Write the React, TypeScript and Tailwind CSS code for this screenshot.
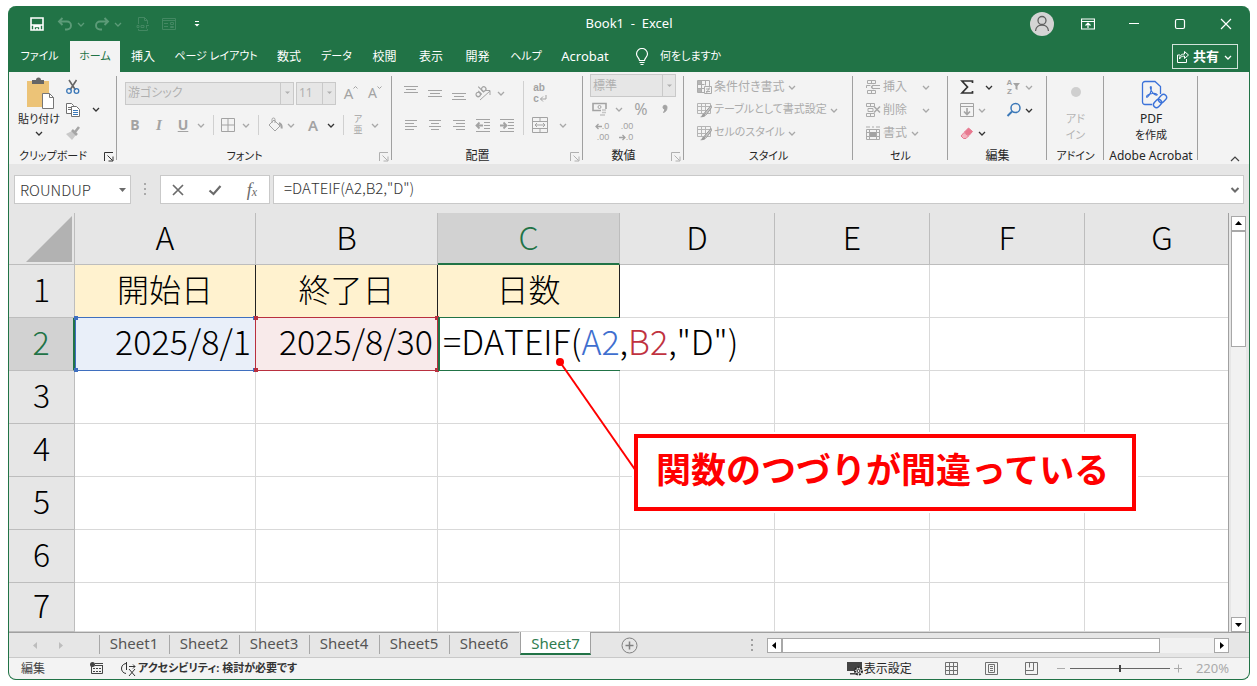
import React, { useState } from 'react';

interface IconProps {
  className?: string;
}

interface SvgProps extends IconProps {
  w?: number;
  h?: number;
  children: React.ReactNode;
}

function Svg({ w = 16, h = 16, className = '', children }: SvgProps) {
  return (
    <svg
      width={w}
      height={h}
      viewBox={`0 0 ${w} ${h}`}
      fill="none"
      stroke="currentColor"
      className={`shrink-0 ${className}`}
      aria-hidden="true"
    >
      {children}
    </svg>
  );
}

function Chevron({ className = 'text-[#a8a8a8]' }: IconProps) {
  return (
    <Svg w={12} h={12} className={className}>
      <path d="M3 5l3 3 3-3" strokeWidth="1.3" />
    </Svg>
  );
}

function Lines({ rows }: { rows: [number, number, number][] }) {
  return (
    <Svg w={16} h={20}>
      {rows.map(([x1, x2, y]) => (
        <path key={y} d={`M${x1} ${y}.5H${x2}`} />
      ))}
    </Svg>
  );
}

interface ToolProps {
  label: string;
  className?: string;
  children: React.ReactNode;
}

function Tool({ label, className = 'w-6', children }: ToolProps) {
  return (
    <button type="button" aria-label={label} className={`flex shrink-0 items-center justify-center ${className}`}>
      {children}
    </button>
  );
}

function Sep() {
  return <span className="mx-[6px] h-5 w-px shrink-0 bg-[#d0d0d0]" />;
}

interface GroupProps {
  title: string;
  className: string;
  launcher?: string;
  small?: boolean;
  children: React.ReactNode;
}

function Group({ title, className, launcher, small = false, children }: GroupProps) {
  return (
    <section aria-label={title} className={`relative flex shrink-0 flex-col ${className}`}>
      <div className="h-[76px] text-[#a3a3a3]">{children}</div>
      <div
        className={`flex h-4 items-center justify-center whitespace-nowrap text-[#262626] ${
          small ? 'text-[11px]' : 'text-xs'
        } ${launcher ? 'pr-5' : ''}`}
      >
        {title}
      </div>
      {launcher && (
        <button type="button" aria-label={`${title}の設定`} className={`absolute right-[3px] bottom-[2px] ${launcher}`}>
          <Svg w={10} h={10}>
            <path d="M.5 9V.5H9M3.500 3.500l5 5M9 4.500V9H4.500" />
          </Svg>
        </button>
      )}
      <span className="absolute top-1 right-0 bottom-1 w-px bg-[#a0a0a0]" />
    </section>
  );
}

interface ComboProps {
  label: string;
  value: string;
  className: string;
}

function Combo({ label, value, className }: ComboProps) {
  return (
    <div className={`flex h-[23px] border border-[#c9c9c9] bg-[#e6e6e6] ${className}`}>
      <select
        aria-label={label}
        defaultValue={value}
        disabled
        className="min-w-0 flex-1 appearance-none pl-[2px] text-xs leading-5 text-[#b0b0b0]"
      >
        <option>{value}</option>
      </select>
      <span className="flex w-[13px] items-center justify-center border-l border-[#c9c9c9] text-[#b0b0b0]">
        <Svg w={7} h={4}>
          <path d="M1 .5h5L3.500 3z" fill="currentColor" stroke="none" />
        </Svg>
      </span>
    </div>
  );
}

const tabs = [
  { name: 'ファイル', width: 'w-[61px] text-[11px]' },
  { name: 'ホーム', width: 'w-[50px] text-[11px]' },
  { name: '挿入', width: 'w-[46px]' },
  { name: 'ページ レイアウト', width: 'w-[100px] text-[11px]' },
  { name: '数式', width: 'w-[46px]' },
  { name: 'データ', width: 'w-[49px] text-[11px]' },
  { name: '校閲', width: 'w-[47px]' },
  { name: '表示', width: 'w-[46px]' },
  { name: '開発', width: 'w-[47px]' },
  { name: 'ヘルプ', width: 'w-[50px] text-[11px]' },
  { name: 'Acrobat', width: 'w-[68px] text-[13px]' }
];

function TitleBar() {
  return (
    <header className="relative flex h-[35px] items-center text-white">
      <div className="flex items-center pl-[18px]">
        <Tool label="上書き保存" className="w-5">
          <Svg w={14} h={14}>
            <path d="M1 1h12v12H1z" strokeWidth="1.600" />
            <path d="M1 8h12M4 13v-3.500h6V13" strokeWidth="1.600" />
            <path d="M7 11v2" strokeWidth="1.600" />
          </Svg>
        </Tool>
        <div className="flex items-center pl-2 text-[#5c9b78]">
          <Tool label="元に戻す" className="w-5">
            <Svg>
              <path d="M5.500 2L2 5.500 5.500 9M2 5.500h8a4 4 0 0 1 0 8H8" strokeWidth="1.900" />
            </Svg>
          </Tool>
          <Chevron className="text-[#5c9b78]" />
          <Tool label="やり直し" className="ml-[5px] w-5">
            <Svg>
              <path d="M10.500 2L14 5.500 10.500 9M14 5.500H6a4 4 0 0 0 0 8h2" strokeWidth="1.900" />
            </Svg>
          </Tool>
          <Chevron className="text-[#5c9b78]" />
          <Tool label="PDF" className="ml-[5px] w-7">
            <Svg className="text-[#438862]">
              <path d="M3.500 8V1.500h6l3 3V8M9.500 1.500v3h3M3.500 13v1.500h9V13" />
              <path d="M2 9.500h2v2H2zM6 9.500h3v2H6zM11 9.500h3M11.500 9v3.500" />
            </Svg>
          </Tool>
          <Tool label="フォーム" className="w-6">
            <Svg className="text-[#438862]">
              <path d="M1.500 2.500h13v11h-13zM1.500 4.500h13M3 7.500h4M3 10.500h4M9.500 6.500h3v2h-3zM9.500 10.500h3v1h-3z" />
            </Svg>
          </Tool>
        </div>
        <Tool label="クイック アクセスのユーザー設定" className="w-8">
          <Svg w={8} h={8}>
            <path d="M2 1.500h4" />
            <path d="M1.500 4h5L4 6.500z" fill="currentColor" stroke="none" />
          </Svg>
        </Tool>
      </div>
      <h1 className="absolute inset-x-0 pt-px text-center text-[13px] font-normal whitespace-pre">Book1  -  Excel</h1>
      <div className="relative ml-auto flex items-center pr-[11px]">
        <Tool label="アカウント" className="w-6">
          <Svg w={24} h={24} className="text-[#5f5f5f]">
            <circle cx="12" cy="12" r="12" fill="#d4d4d4" stroke="none" />
            <circle cx="12" cy="8.500" r="4" strokeWidth="1.300" />
            <path d="M5.500 19c.5-8 12.500-8 13 0" strokeWidth="1.300" />
          </Svg>
        </Tool>
        <Tool label="リボンの表示オプション" className="ml-[22px] w-6">
          <Svg w={14} h={12}>
            <path d="M.5 1h13v10H.5zM.5 3.500h13M7 10V5.500M4.500 7.500L7 5l2.500 2.500" strokeWidth="1.200" />
          </Svg>
        </Tool>
        <Tool label="最小化" className="ml-[22px] w-6">
          <Svg w={12} h={12}>
            <path d="M1 5.500h10" />
          </Svg>
        </Tool>
        <Tool label="最大化" className="ml-[22px] w-6">
          <Svg w={12} h={12}>
            <rect x="1.500" y="1.500" width="9" height="9" rx="1.500" strokeWidth="1.200" />
          </Svg>
        </Tool>
        <Tool label="閉じる" className="ml-[22px] w-6">
          <Svg w={12} h={12}>
            <path d="M1 1l10 10M11 1L1 11" strokeWidth="1.200" />
          </Svg>
        </Tool>
      </div>
    </header>
  );
}

function TabBar() {
  const [active, setActive] = useState('ホーム');

  return (
    <nav className="flex h-[31px] text-xs text-white">
      {tabs.map((tab) => (
        <button
          key={tab.name}
          type="button"
          onClick={() => setActive(tab.name)}
          className={`flex shrink-0 items-center justify-center whitespace-nowrap ${tab.width} ${
            tab.name === active ? 'bg-[#f3f3f3] text-[#217346]' : ''
          }`}
        >
          {tab.name}
        </button>
      ))}
      <button type="button" className="ml-4 flex shrink-0 items-center gap-[11px] text-[11px] whitespace-nowrap">
        <Svg w={14} h={18}>
          <path d="M4.500 12.500c0-2.500-3-3.500-3-6.500a5.500 5.500 0 0 1 11 0c0 3-3 4-3 6.500zM4.500 14.500h5M5.500 16.500h3" strokeWidth="1.200" />
        </Svg>
        何をしますか
      </button>
      <button
        type="button"
        className="mt-[3px] mr-[11px] ml-auto flex h-[25px] w-[66px] shrink-0 items-center justify-center border border-white/80 text-[13px] font-bold"
      >
        <Svg w={14} h={14} className="mr-[3px]">
          <path d="M4 5H1.500v7.500h9V9M3.500 9c0-3.500 2-5 5-5V1.500L12.500 5 8.500 8.500V6C6 6 4.500 7 3.500 9z" />
        </Svg>
        共有
        <Chevron className="ml-[3px] text-white" />
      </button>
    </nav>
  );
}

function TableGlyph() {
  return (
    <Svg>
      <path d="M1.500 1.500h13v10h-13zM1.500 4.500h13M1.500 8.500h13M5.500 1.500v10M9.500 1.500v10" stroke="#b5b5b5" />
      <path d="M15 3.500L8.500 11l2 1.500 5-7z" fill="#c4c4c4" stroke="#9c9c9c" />
      <path d="M4 15c2 0 2-3.500 4-3.500l2 1.500c-1 2-3.500 2.500-6 2z" fill="#9c9c9c" stroke="none" />
    </Svg>
  );
}

const styleCommands = [
  {
    name: '条件付き書式',
    size: 'text-xs',
    icon: (
      <Svg>
        <path d="M1.500 1.500h12v12h-12zM1.500 5.500h7M1.500 9.500h7M5.500 1.500v12M9.500 1.500v5" />
        <path d="M2 2h3v3H2zM2 10h3v3H2z" fill="#b5b5b5" stroke="none" />
        <path d="M8.500 7.500h7v7h-7z" fill="#f3f3f3" />
        <path d="M10 10h4M10 12.500h4M13.500 8.500l-3 5.500" />
      </Svg>
    )
  },
  { name: 'テーブルとして書式設定', size: 'text-[11px]', icon: <TableGlyph /> },
  { name: 'セルのスタイル', size: 'text-[11px]', icon: <TableGlyph /> }
];

const cellCommands = [
  {
    name: '挿入',
    icon: (
      <Svg>
        <path d="M2.500 1.500h8v3h-8zM6.500 1.500v3M2.500 11.500h8v3h-8zM6.500 11.500v3M1.500 9V6.500h4M15 6.500H7v3h8M9 6l-3 2 3 2" />
      </Svg>
    )
  },
  {
    name: '削除',
    icon: (
      <Svg>
        <path d="M1.500 1.500h8v3h-8zM5.500 1.500v3M1.500 11.500h8v3h-8zM5.500 11.500v3M3 6.500h5v3H3z" />
        <path d="M9 4.500l6 6M15 4.500l-6 6" strokeWidth="1.600" />
      </Svg>
    )
  },
  {
    name: '書式',
    icon: (
      <Svg>
        <path d="M1.500 4.500h13v10h-13zM4.500 4.500v10M11.500 4.500v10M1.500 7.500h13M1.500 11.500h13M2 1v2M14 1v2M3 2h2M7 2h2M11 2h2" />
        <path d="M5 7h6v5H5z" fill="#a3a3a3" stroke="none" />
      </Svg>
    )
  }
];

const tiny = "font-['Liberation_Sans','Noto_Sans_CJK_JP',sans-serif]";

function Ribbon() {
  return (
    <div className="flex h-[92px] bg-[#f3f3f3]">
      <Group title="クリップボード" small className="w-[108px]" launcher="text-[#333]">
        <div className="flex">
          <button type="button" className="ml-[6px] flex w-12 flex-col items-center text-[11px] text-[#262626]">
            <Svg w={30} h={34} className="mt-[4px] mb-px ml-[2px]">
              <path d="M2 5h22v26H2z" fill="#ecc377" stroke="none" />
              <path d="M7 8V4h4a2.500 2.500 0 0 1 5 0h3v4z" fill="#666" stroke="none" />
              <path d="M17.500 17.500h7l4 4v11h-11z" fill="#fff" stroke="#777" />
              <path d="M24.500 17.500v4h4" stroke="#777" />
            </Svg>
            <span className="leading-4 whitespace-nowrap">貼り付け</span>
            <Chevron className="text-[#333]" />
          </button>
          <div className="flex flex-col pt-[3px]">
            <Tool label="切り取り" className="h-[23px] w-5">
              <Svg>
                <path d="M4 1l6.500 10M11.500 1L5 11" stroke="#666" strokeWidth="1.600" />
                <circle cx="4" cy="12" r="2.300" stroke="#3b78b8" strokeWidth="1.300" />
                <circle cx="11.500" cy="12" r="2.300" stroke="#3b78b8" strokeWidth="1.300" />
              </Svg>
            </Tool>
            <Tool label="コピー" className="h-[23px] w-5">
              <Svg className="text-[#707070]">
                <path d="M1.500 1.500h5l2 2v8h-7zM3 5.500h3M3 7.500h3" fill="#fff" />
                <path d="M6.500 4.500h5l3 3v7h-8z" fill="#fff" />
                <path d="M8 8.500h5M8 10.500h5M8 12.500h5" stroke="#3b78b8" />
              </Svg>
            </Tool>
            <Tool label="書式のコピー" className="h-[23px] w-5">
              <Svg>
                <path d="M1 9l6-3 4 4-4 5z" fill="#c9c9c9" stroke="none" />
                <path d="M7 5l5 5M10 7l4-5" stroke="#a5a5a5" strokeWidth="2.600" />
              </Svg>
            </Tool>
          </div>
          <Chevron className="mt-[31px] ml-[7px] text-[#333]" />
        </div>
      </Group>

      <Group title="フォント" small className="w-[275px]" launcher="text-[#b0b0b0]">
        <div className="flex flex-col pt-[5px]">
          <div className="flex h-8 items-center pl-2">
            <Combo label="フォント名" value="游ゴシック" className="w-[169px]" />
            <Combo label="フォント サイズ" value="11" className="ml-[2px] w-10" />
            <Tool label="フォント サイズの拡大" className="ml-[3px] w-6 text-[15px]">
              A
              <Svg w={5} h={12} className="mb-1">
                <path d="M.5 3.500L2.500 1.500l2 2" />
              </Svg>
            </Tool>
            <Tool label="フォント サイズの縮小" className="w-6 text-sm">
              A
              <Svg w={5} h={12} className="mb-1">
                <path d="M.5 1.500l2 2 2-2" />
              </Svg>
            </Tool>
          </div>
          <div className="flex h-8 items-center pl-[6px]">
            <Tool label="太字">
              <b className="text-sm">B</b>
            </Tool>
            <Tool label="斜体">
              <i className="font-['Liberation_Serif',serif] text-[15px] font-bold">I</i>
            </Tool>
            <Tool label="下線">
              <span className="text-sm font-bold underline">U</span>
            </Tool>
            <Chevron />
            <Sep />
            <Tool label="罫線" className="w-4">
              <Svg>
                <path d="M1.500 1.500h13v13h-13zM8 1.500v13M1.500 8h13" />
              </Svg>
            </Tool>
            <Chevron className="ml-1 text-[#a8a8a8]" />
            <Sep />
            <Tool label="塗りつぶしの色" className="w-5">
              <Svg>
                <path d="M7 3l6 6-5 5-6-6zM5 6V2.500a1.500 1.500 0 0 1 3 0V6" />
                <path d="M12 6c2 1 3 3 2.500 5.500" strokeWidth="2" />
              </Svg>
            </Tool>
            <Chevron />
            <Tool label="フォントの色" className="ml-1 w-6">
              <span className="text-[15px] font-semibold">A</span>
            </Tool>
            <Chevron className="text-[#333]" />
            <Sep />
            <Tool label="ふりがな" className="w-4">
              <span className={`flex flex-col items-center text-[9px] leading-[11px] ${tiny}`}>
                <span>ア</span>
                <span>亜</span>
              </span>
            </Tool>
            <Chevron className="ml-[3px] text-[#a8a8a8]" />
          </div>
        </div>
      </Group>

      <Group title="配置" className="w-[191px]" launcher="text-[#b0b0b0]">
        <div className="flex pt-[5px] pl-[7px]">
          <div className="w-[120px]">
            <div className="flex h-8 items-center">
              <Tool label="上揃え"><Lines rows={[[1, 15, 3], [3, 13, 6], [1, 15, 9]]} /></Tool>
              <Tool label="上下中央揃え"><Lines rows={[[1, 15, 7], [3, 13, 10], [1, 15, 13]]} /></Tool>
              <Tool label="下揃え"><Lines rows={[[1, 15, 10], [3, 13, 13], [1, 15, 16]]} /></Tool>
              <Tool label="方向">
                <Svg w={18} h={18} className="overflow-visible">
                  <path d="M6 16L16 7M11.500 6.500H16V11" />
                  <g transform="rotate(-45 6 8)" strokeWidth="1.200">
                    <circle cx="3" cy="8.500" r="2.200" />
                    <path d="M5.500 6v5M8.500 3v8" />
                    <circle cx="10.800" cy="8.500" r="2.200" />
                  </g>
                </Svg>
              </Tool>
              <Chevron />
            </div>
            <div className="flex h-8 items-center">
              <Tool label="左揃え"><Lines rows={[[2, 14, 5], [2, 11, 8], [2, 14, 11], [2, 11, 14]]} /></Tool>
              <Tool label="中央揃え"><Lines rows={[[2, 14, 5], [4, 12, 8], [2, 14, 11], [4, 12, 14]]} /></Tool>
              <Tool label="右揃え"><Lines rows={[[2, 14, 5], [5, 14, 8], [2, 14, 11], [5, 14, 14]]} /></Tool>
              <Tool label="インデントを減らす">
                <Svg>
                  <path d="M1 2.500h14M9 5.500h6M9 8.500h6M9 11.500h6M1 14.500h14" />
                  <path d="M8 8.500H2M4.500 5.500l-3 3 3 3" strokeWidth="1.800" />
                </Svg>
              </Tool>
              <Tool label="インデントを増やす">
                <Svg>
                  <path d="M1 2.500h14M9 5.500h6M9 8.500h6M9 11.500h6M1 14.500h14" />
                  <path d="M1 8.500h6M4.500 5.500l3 3-3 3" strokeWidth="1.800" />
                </Svg>
              </Tool>
            </div>
          </div>
          <span className="mx-1 mt-1 h-[54px] w-px bg-[#d0d0d0]" />
          <div>
            <div className="flex h-8 items-center">
              <Tool label="折り返して全体を表示する">
                <span className={`flex flex-col text-left text-[10px] leading-[11px] font-bold ${tiny}`}>
                  <span>ab</span>
                  <span className="flex">
                    c
                    <Svg w={8} h={9}>
                      <path d="M7 2v4H1.500M4 3.500L1.500 6 4 8.500" />
                    </Svg>
                  </span>
                </span>
              </Tool>
            </div>
            <div className="flex h-8 items-center">
              <Tool label="セルを結合して中央揃え">
                <Svg>
                  <path d="M.5 .5h15v15H.5zM.5 4.500h15M.5 11.500h15M8 .5v4M8 11.500v4M3 8h10M5 6L3 8l2 2M11 6l2 2-2 2" />
                </Svg>
              </Tool>
              <Chevron className="ml-[5px] text-[#a8a8a8]" />
            </div>
          </div>
        </div>
      </Group>

      <Group title="数値" className="w-[101px]" launcher="text-[#b0b0b0]">
        <div className="pt-[2px] pl-[7px]">
          <Combo label="表示形式" value="標準" className="w-[86px]" />
          <div className="flex h-[23px] items-center">
            <Tool label="通貨表示形式" className="w-5">
              <Svg>
                <path d="M1 2.500h13v7H1z" strokeWidth="1.600" />
                <circle cx="7.500" cy="6" r="1.500" />
                <path d="M9 8h6v7H9z" fill="#f3f3f3" stroke="none" />
                <path d="M10 9h4M10 11.500h4M8 14h5" stroke="#c5c5c5" strokeWidth="1.600" />
              </Svg>
            </Tool>
            <Chevron className="ml-[3px] text-[#a8a8a8]" />
            <Tool label="パーセント スタイル" className="ml-1 w-6 text-base">%</Tool>
            <Tool label="桁区切りスタイル">
              <Svg w={8} h={12}>
                <path d="M2 4a2 2 0 1 1 4 .5C6 7 4.500 9 2.500 9.500L4 6.500C3 6.500 2 5.500 2 4z" fill="currentColor" />
              </Svg>
            </Tool>
          </div>
          <div className={`flex h-[23px] items-center text-[9px] leading-[11px] ${tiny}`}>
            <Tool label="小数点以下の表示桁数を増やす">
              <span className="flex flex-col items-end">
                <span className="flex items-center">
                  <Svg w={7} h={7}>
                    <path d="M7 3.500H1.500M3.500 1L1 3.500 3.500 6" strokeWidth="1.300" />
                  </Svg>
                  .0
                </span>
                <span>.00</span>
              </span>
            </Tool>
            <Tool label="小数点以下の表示桁数を減らす">
              <span className="flex flex-col items-end">
                <span>.00</span>
                <span className="flex items-center">
                  <Svg w={7} h={7}>
                    <path d="M0 3.500h5.500M3.500 1L6 3.500 3.500 6" strokeWidth="1.300" />
                  </Svg>
                  .0
                </span>
              </span>
            </Tool>
          </div>
        </div>
      </Group>

      <Group title="スタイル" small className="w-[169px]">
        <div className="flex flex-col items-start pt-[3px] pl-3">
          {styleCommands.map((cmd) => (
            <button key={cmd.name} type="button" className={`flex h-[23px] items-center whitespace-nowrap text-[#ababab] ${cmd.size}`}>
              {cmd.icon}
              <span className="mr-px ml-[2px]">{cmd.name}</span>
              <Chevron />
            </button>
          ))}
        </div>
      </Group>

      <Group title="セル" small className="w-[95px]">
        <div className="flex flex-col items-start pt-[3px] pl-3">
          {cellCommands.map((cmd, index) => (
            <button key={cmd.name} type="button" className="flex h-[23px] items-center text-xs text-[#ababab]">
              {cmd.icon}
              <span className={index === 2 ? 'mr-[2px] ml-[2px]' : 'mr-[13px] ml-[2px]'}>{cmd.name}</span>
              <Chevron />
            </button>
          ))}
        </div>
      </Group>

      <Group title="編集" className="w-[99px]">
        <div className="flex pt-[3px] pl-[7px]">
          <div className="w-[47px]">
            <div className="flex h-[23px] items-center">
              <Tool label="合計">
                <Svg className="text-[#333]">
                  <path d="M13.500 4V2H3l5.500 6L3 14h10.500v-2" strokeWidth="1.700" />
                </Svg>
              </Tool>
              <Chevron className="ml-1 text-[#333]" />
            </div>
            <div className="flex h-[23px] items-center">
              <Tool label="フィル">
                <Svg>
                  <path d="M1.500 1.500h13v13h-13zM1.500 4.500h13" />
                  <path d="M8 6v6M5 9.500l3 3 3-3" strokeWidth="1.600" />
                </Svg>
              </Tool>
              <Chevron className="-ml-[3px] text-[#a8a8a8]" />
            </div>
            <div className="flex h-[23px] items-center">
              <Tool label="クリア">
                <Svg>
                  <path d="M9.500 3l4 3.500-3.500 4L5.500 7z" fill="#e8788f" stroke="#e8788f" />
                  <path d="M5 7.500l4.500 3.500-2.500 2.500H4.500L2 11z" fill="#f2b3bf" stroke="#e8788f" />
                </Svg>
              </Tool>
              <Chevron className="-ml-[3px] text-[#333]" />
            </div>
          </div>
          <div>
            <div className="flex h-[23px] items-center">
              <Tool label="並べ替えとフィルター">
                <span className={`flex flex-col text-[8px] leading-[9px] font-bold ${tiny}`}>
                  <span>A</span>
                  <span>Z</span>
                </span>
                <Svg w={9} h={10} className="mb-[2px]">
                  <path d="M1 2h7L5.500 5v4L3.500 8V5z" fill="currentColor" stroke="none" />
                </Svg>
              </Tool>
              <Chevron className="-ml-[3px] text-[#a8a8a8]" />
            </div>
            <div className="flex h-[23px] items-center">
              <Tool label="検索と選択">
                <Svg className="text-[#3b78b8]">
                  <circle cx="9.500" cy="6" r="4.500" strokeWidth="1.500" />
                  <path d="M6 9.500L1.500 14" strokeWidth="2" />
                </Svg>
              </Tool>
              <Chevron className="-ml-[3px] text-[#333]" />
            </div>
          </div>
        </div>
      </Group>

      <Group title="アドイン" small className="w-[57px]">
        <button type="button" className="flex w-full flex-col items-center pt-[15px] text-[11px] leading-4 text-[#b5b5b5]">
          <span className="mb-[14px] size-[10px] rounded-full bg-[#cfcfcf]" />
          <span>アド</span>
          <span>イン</span>
        </button>
      </Group>

      <Group title="Adobe Acrobat" className="w-[94px]">
        <button type="button" className="flex w-full flex-col items-center pt-[8px] text-xs leading-4 text-[#262626]">
          <Svg w={28} h={30} className="ml-[6px] mb-px text-[#3b72d9]">
            <path d="M12 24.500H5a2.500 2.500 0 0 1-2.500-2.500V4A2.500 2.500 0 0 1 5 1.500h10l5.500 5V14" strokeWidth="1.300" />
            <path d="M11 6.500c-1 0-1 2 .5 4.500s4 4.500 5.500 4c1-.5-1-2-4.500-1.500s-6 2-6 3.500c.5 1 3-1.500 4-4.500s1-6 .5-6z" strokeWidth="1.100" />
            <g transform="rotate(-45 20 21)" strokeWidth="1.400">
              <rect x="12" y="18" width="9" height="6" rx="3" />
              <rect x="19" y="18" width="9" height="6" rx="3" />
            </g>
          </Svg>
          <span>PDF</span>
          <span className="text-[11px]">を作成</span>
        </button>
      </Group>

      <Tool label="リボンを折りたたむ" className="mt-auto mr-2 mb-px ml-auto w-3">
        <Svg w={10} h={8} className="text-[#444]">
          <path d="M1 6l4-4 4 4" strokeWidth="1.200" />
        </Svg>
      </Tool>
    </div>
  );
}

function FormulaBar() {
  return (
    <div className="flex h-[49px] items-start bg-[#e6e6e6] pt-[11px] pr-[5px] pl-[5px] font-['Noto_Sans_CJK_JP',sans-serif] text-[#6b6b6b] [font-feature-settings:normal]">
      <div className="flex h-[29px] w-[117px] shrink-0 items-center border border-[#c9c9c9] bg-white">
        <input aria-label="名前ボックス" defaultValue="ROUNDUP" className="w-0 flex-1 pl-[5px] text-[15px] leading-6 font-light text-[#333]" />
        <Tool label="名前の一覧" className="w-4">
          <Svg w={7} h={4}>
            <path d="M0 0h7L3.500 4z" fill="currentColor" stroke="none" />
          </Svg>
        </Tool>
      </div>
      <Svg w={29} h={29} className="text-[#aaa]">
        <path d="M13 9h2M13 14h2M13 19h2" strokeWidth="2" />
      </Svg>
      <div className="flex h-[29px] w-[110px] shrink-0 items-center justify-between border border-[#c9c9c9] bg-white px-[5px]">
        <Tool label="キャンセル">
          <Svg w={14} h={14}>
            <path d="M2 2l10 10M12 2L2 12" strokeWidth="1.700" />
          </Svg>
        </Tool>
        <Tool label="入力">
          <Svg w={14} h={14}>
            <path d="M1.500 7.500l4 3.500 7-8" strokeWidth="2.200" />
          </Svg>
        </Tool>
        <Tool label="関数の挿入">
          <i className="font-['Liberation_Serif',serif] text-lg leading-6">
            f<span className="text-xs">x</span>
          </i>
        </Tool>
      </div>
      <div className="ml-[3px] flex h-[29px] min-w-0 flex-1 items-center border border-[#c9c9c9] bg-white">
        <input
          aria-label="数式バー"
          defaultValue={'=DATEIF(A2,B2,"D")'}
          className="min-w-0 flex-1 pb-[3px] pl-[10px] text-[15px] leading-6 font-light text-[#333] [font-kerning:none]"
        />
        <Tool label="数式バーの展開" className="w-4">
          <Svg w={10} h={8}>
            <path d="M1.500 2L5 5.500 8.500 2" strokeWidth="2" />
          </Svg>
        </Tool>
      </div>
    </div>
  );
}

const columns = ['A', 'B', 'C', 'D', 'E', 'F', 'G'];
const emptyRows = [3, 4, 5, 6, 7];
const plain = 'border-r border-b border-[#d9d9d9]';
const headed = 'border-r border-b border-b-[#d9d9d9] border-r-[#222] bg-[#fff2cf] p-0 pb-[7px] text-center';

function Handles({ color }: { color: string }) {
  return (
    <>
      <span className={`absolute -top-[2px] -left-[2px] size-1 ${color}`} />
      <span className={`absolute -top-[2px] -right-[2px] size-1 ${color}`} />
      <span className={`absolute -bottom-[2px] -left-[2px] size-1 ${color}`} />
      <span className={`absolute -right-[2px] -bottom-[2px] size-1 ${color}`} />
    </>
  );
}

function RowHead({ n, selected = false }: { n: number; selected?: boolean }) {
  return (
    <th
      scope="row"
      className={
        selected
          ? 'border-r-2 border-b border-r-[#217346] border-b-[#bdbdbd] bg-[#d2d2d2] p-0 pb-[7px] font-light text-[#217346]'
          : 'border-r border-b border-[#bdbdbd] bg-[#e6e6e6] p-0 pb-[7px] font-light'
      }
    >
      {n}
    </th>
  );
}

function Sheet() {
  return (
    <div className="relative min-w-0 flex-1 overflow-hidden border-r border-[#a0a0a0] bg-white [font-feature-settings:normal]">
      <table className="w-[calc(100%+12px)] table-fixed border-separate border-spacing-0 font-['Noto_Sans_CJK_JP',sans-serif] text-[32px] leading-10 font-light text-black">
        <colgroup>
          <col className="w-[66px]" />
          <col className="w-[181px]" />
          <col className="w-[182px]" />
          <col className="w-[182px]" />
          <col className="w-[155px]" />
          <col className="w-[155px]" />
          <col className="w-[155px]" />
          <col />
        </colgroup>
        <thead>
          <tr className="h-[52px]">
            <th aria-label="すべて選択" className="border-r border-b border-[#bdbdbd] bg-[#e6e6e6] p-0">
              <Svg w={46} h={46} className="mr-[2px] ml-auto block text-[#b2b2b2]">
                <path d="M46 0v46H0z" fill="currentColor" stroke="none" />
              </Svg>
            </th>
            {columns.map((col) => (
              <th
                key={col}
                scope="col"
                className={
                  col === 'C'
                    ? 'border-r border-b-2 border-r-[#bdbdbd] border-b-[#217346] bg-[#d2d2d2] p-0 pb-1 font-light text-[#217346]'
                    : 'border-r border-b border-[#bdbdbd] bg-[#e6e6e6] p-0 pb-[5px] font-light'
                }
              >
                {col}
              </th>
            ))}
          </tr>
        </thead>
        <tbody>
          <tr className="h-[53px]">
            <RowHead n={1} />
            <td className={headed}>開始日</td>
            <td className={headed}>終了日</td>
            <td className={headed}>日数</td>
            <td className={plain} />
            <td className={plain} />
            <td className={plain} />
            <td className={plain} />
          </tr>
          <tr className="h-[53px]">
            <RowHead n={2} selected />
            <td className="relative bg-[#e9eff9] p-0 pr-[5px] pb-[7px] text-right text-[34px]">
              2025/8/1
              <span className="absolute -top-px right-0 bottom-0 left-0 border border-[#3f6fbf]">
                <Handles color="bg-[#3f6fbf]" />
              </span>
            </td>
            <td className="relative bg-[#f8eaea] p-0 pr-[5px] pb-[7px] text-right text-[34px]">
              2025/8/30
              <span className="absolute -top-px right-0 bottom-0 -left-px border border-[#b9303f]">
                <Handles color="bg-[#b9303f]" />
              </span>
            </td>
            <td
              colSpan={2}
              className={`relative p-0 pb-[7px] pl-[5px] text-[34px] whitespace-nowrap [font-kerning:none] ${plain}`}
            >
              =DATEIF(<span className="text-[#3f6fcf]">A2</span>,<span className="text-[#c0323f]">B2</span>,"D")
              <span className="absolute -top-px -bottom-px left-0 w-[182px] border-y border-l-2 border-[#217346]" />
            </td>
            <td className={plain} />
            <td className={plain} />
            <td className={plain} />
          </tr>
          {emptyRows.map((n) => (
            <tr key={n} className={n === 7 ? 'h-[49px]' : 'h-[53px]'}>
              <RowHead n={n} />
              {columns.map((col) => (
                <td key={col} className={plain} />
              ))}
            </tr>
          ))}
        </tbody>
      </table>

      <p className="absolute top-[221px] left-[625px] flex h-[77px] w-[502px] items-center border-4 border-[#f00] bg-white pb-2 pl-[18px] font-['Noto_Sans_CJK_JP',sans-serif] text-[35px] font-bold whitespace-nowrap text-[#f00] outline-2 outline-white">
        関数のつづりが間違っている
      </p>
      <svg width="90" height="124" viewBox="0 0 90 124" className="absolute top-[144px] left-[546px]" aria-hidden="true">
        <path d="M5 5l76 109" stroke="#f00" strokeWidth="2" />
        <circle cx="5" cy="5" r="4" fill="#f00" />
      </svg>
    </div>
  );
}

function Arrow({ d }: { d: string }) {
  return (
    <Svg w={9} h={9} className="text-black">
      <path d={d} fill="currentColor" stroke="none" />
    </Svg>
  );
}

const scrollButton = 'size-[15px] border border-[#a8a8a8] bg-white';

function SheetTabs() {
  const [active, setActive] = useState(7);

  return (
    <div className="flex h-[26px] border-b border-[#c9c9c9] bg-[#e6e6e6] font-['Noto_Sans',sans-serif] text-[15px]">
      <div className="flex w-[90px] items-center gap-4 border-t border-[#a0a0a0] pl-[22px] text-[#bdbdbd]">
        <Svg w={9} h={9}>
          <path d="M6 1v7L2 4.500z" fill="currentColor" stroke="none" />
        </Svg>
        <Svg w={9} h={9}>
          <path d="M3 1v7l4-3.500z" fill="currentColor" stroke="none" />
        </Svg>
      </div>
      {[1, 2, 3, 4, 5, 6, 7].map((n) => (
        <button
          key={n}
          type="button"
          onClick={() => setActive(n)}
          className={
            n === active
              ? 'ml-px h-[23px] w-[71px] border-x border-b-2 border-x-[#a0a0a0] border-b-[#217346] bg-white leading-5 text-[#2f7d50]'
              : 'relative w-[70px] border-t border-[#a0a0a0] pb-1 leading-5 text-[#555] before:absolute before:top-[2px] before:left-0 before:h-[19px] before:w-px before:bg-[#a8a8a8]'
          }
        >
          Sheet{n}
        </button>
      ))}
      <div className="flex min-w-0 flex-1 items-center border-t border-[#a0a0a0] pl-[30px]">
        <Tool label="新しいシート" className="w-[17px]">
          <Svg w={17} h={17} className="text-[#808080]">
            <circle cx="8.500" cy="8.500" r="7.500" />
            <path d="M8.500 4.500v8M4.500 8.500h8" strokeWidth="1.500" />
          </Svg>
        </Tool>
        <Svg w={4} h={16} className="ml-auto text-[#a0a0a0]">
          <path d="M1 3h2M1 8h2M1 13h2" strokeWidth="2" />
        </Svg>
        <div className="mr-5 ml-[13px] flex h-[15px] w-[462px] shrink-0 bg-[#f1f1f1]">
          <Tool label="左へスクロール" className={scrollButton}>
            <Arrow d="M6 1v7L2 4.500z" />
          </Tool>
          <span className="w-[378px] border border-[#a8a8a8] bg-white" />
          <Tool label="右へスクロール" className={`ml-auto ${scrollButton}`}>
            <Arrow d="M3 1v7l4-3.500z" />
          </Tool>
        </div>
      </div>
    </div>
  );
}

function StatusBar() {
  return (
    <footer className="flex h-[21px] items-center bg-[#f3f3f3] pl-3 text-xs whitespace-nowrap text-[#444]">
      <span>編集</span>
      <Svg w={13} h={13} className="ml-[45px]">
        <path d="M1.500 3.500v8h11v-8M5 1.500h8M5 3.500h8M3 6.500h2M6 6.500h2M9 6.500h2M3 9.500h2M6 9.500h2M9 9.500h2" />
        <circle cx="2.500" cy="2.500" r="2.500" fill="currentColor" stroke="none" />
      </Svg>
      <button type="button" className="ml-[18px] flex items-center text-[11px] font-bold text-[#333]">
        <Svg w={17} h={16}>
          <path d="M6 2.500a5 5 0 0 0-1 10M5.500 1v8M8 5.500h6M12 3.500l2 2-2 2M8 8l6 7M14 8l-6 7" />
        </Svg>
        アクセシビリティ: 検討が必要です
      </button>
      <button type="button" className="ml-auto flex items-center text-[#262626]">
        <Svg w={17} h={15}>
          <path d="M0 1h15v9H0zM3 12h6v1.500H3z" fill="#444" stroke="none" />
          <circle cx="11.500" cy="10" r="3.500" fill="#f3f3f3" strokeWidth="2" strokeDasharray="2 1" />
          <circle cx="11.500" cy="10" r="1.500" />
        </Svg>
        表示設定
      </button>
      <Tool label="標準" className="ml-[31px] w-[17px] text-[#707070]">
        <Svg w={13} h={13}>
          <path d="M.5 .5h12v12H.5zM4.500 .5v12M8.500 .5v12M.5 4.500h12M.5 8.500h12" />
        </Svg>
      </Tool>
      <Tool label="ページ レイアウト" className="ml-[23px] w-[17px] text-[#707070]">
        <Svg w={13} h={13}>
          <path d="M.5 .5h12v12H.5zM3.500 2.500h6v8h-6zM5 4.500h3M5 6.500h3M5 8.500h3" />
        </Svg>
      </Tool>
      <Tool label="改ページ プレビュー" className="ml-[23px] w-[17px] text-[#707070]">
        <Svg w={13} h={13}>
          <path d="M.5 .5h12v12H.5zM.5 8.500h8v-8M4.500 .5v5" />
        </Svg>
      </Tool>
      <div className="ml-[17px] flex items-center text-[#aaa]">
        <Svg w={9} h={9}>
          <path d="M0 4.500h8" />
        </Svg>
        <input
          type="range"
          aria-label="ズーム"
          min={0}
          max={100}
          defaultValue={50}
          className="mx-[4px] h-3 w-[100px] appearance-none bg-transparent [&::-webkit-slider-runnable-track]:h-px [&::-webkit-slider-runnable-track]:bg-[#666] [&::-webkit-slider-thumb]:-mt-[3px] [&::-webkit-slider-thumb]:h-[7px] [&::-webkit-slider-thumb]:w-[2px] [&::-webkit-slider-thumb]:appearance-none [&::-webkit-slider-thumb]:bg-[#444]"
        />
        <Svg w={9} h={9}>
          <path d="M0 4.500h8M4.500 .5v8" />
        </Svg>
      </div>
      <span className="mr-5 ml-[13px] text-[13px] text-[#aaa]">220%</span>
    </footer>
  );
}

export default function App() {
  return (
    <div className="min-h-screen bg-white py-[6px] pr-[7px] pl-2 font-['Noto_Sans','Noto_Sans_CJK_JP',sans-serif] [font-feature-settings:'palt']">
      <div className="overflow-hidden rounded-lg border-x border-b border-[#217346] bg-[#217346]">
        <TitleBar />
        <TabBar />
        <Ribbon />
        <FormulaBar />
        <div className="flex bg-[#e6e6e6]">
          <Sheet />
          <div className="flex w-5 shrink-0 flex-col items-center pt-[3px] pr-px">
            <div className="flex w-[15px] flex-1 flex-col bg-[#f1f1f1]">
              <Tool label="上へスクロール" className={scrollButton}>
                <Arrow d="M1 6h7L4.500 2z" />
              </Tool>
              <span className="h-[116px] border border-[#a8a8a8] bg-white" />
              <Tool label="下へスクロール" className={`mt-auto ${scrollButton}`}>
                <Arrow d="M1 3h7L4.500 7z" />
              </Tool>
            </div>
          </div>
        </div>
        <SheetTabs />
        <StatusBar />
      </div>
    </div>
  );
}
